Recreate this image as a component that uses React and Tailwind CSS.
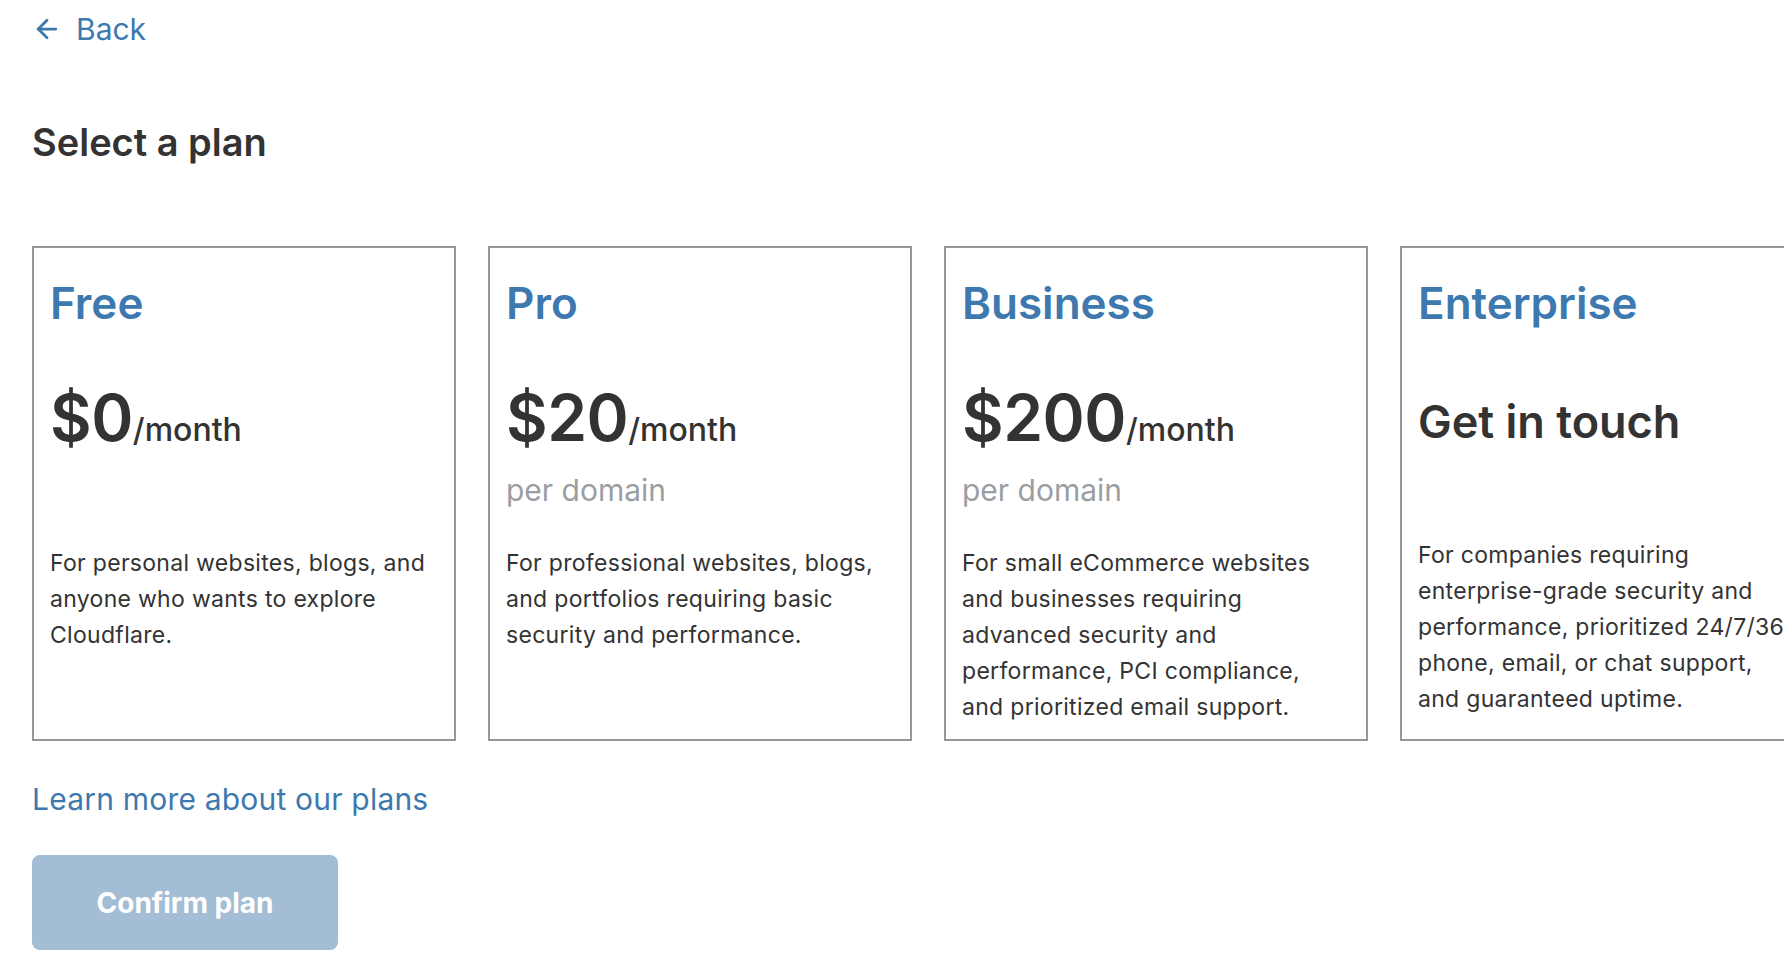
import { ArrowLeft } from "lucide-react";

const plans = [
  {
    name: "Free",
    price: "$0",
    perDomain: false,
    desc: "For personal websites, blogs, and anyone who wants to explore Cloudflare.",
  },
  {
    name: "Pro",
    price: "$20",
    perDomain: true,
    desc: "For professional websites, blogs, and portfolios requiring basic security and performance.",
  },
  {
    name: "Business",
    price: "$200",
    perDomain: true,
    desc: "For small eCommerce websites and businesses requiring advanced security and performance, PCI compliance, and prioritized email support.",
  },
];

function PlanCard({ plan }) {
  return (
    <div className="w-[424px] h-[495px] shrink-0 border-2 border-[#929799] pl-4 pr-[22px] pt-[28px]">
      <h2 className="text-[44px] leading-[54px] font-semibold text-[#3d79ae]">{plan.name}</h2>
      <div className="h-[215px] pt-[50px]">
        <div className="flex items-baseline text-[#333333] leading-[76px]">
          <span className="text-[64px] font-semibold tracking-[-0.5px]">{plan.price}</span>
          <span className="text-[32px] font-medium">/month</span>
        </div>
        {plan.perDomain && (
          <p className="mt-[4px] text-[30px] leading-[36px] text-[#9a9ea3]">per domain</p>
        )}
      </div>
      <p className="text-[23px] leading-[36px] text-[#333333] tracking-[0.3px]">{plan.desc}</p>
    </div>
  );
}

export default function App() {
  return (
    <div
      className="min-h-screen w-full overflow-hidden bg-white pl-8"
      style={{ fontFamily: "Inter, 'Noto Sans', sans-serif" }}
    >
      <a href="#" className="pt-[11px] flex items-center gap-[14px] text-[30px] leading-[36px] text-[#3d79ae]">
        <ArrowLeft size={30} strokeWidth={2.2} />
        Back
      </a>

      <h1 className="mt-[73px] text-[38px] leading-[44px] font-semibold text-[#333333]">Select a plan</h1>

      <div className="mt-[82px] flex gap-8">
        {plans.map((p) => (
          <PlanCard key={p.name} plan={p} />
        ))}
        <div className="w-[424px] h-[495px] shrink-0 border-2 border-[#929799] px-4 pt-[28px]">
          <h2 className="text-[44px] leading-[54px] font-semibold text-[#3d79ae]">Enterprise</h2>
          <div className="h-[207px] pt-[54px]">
            <p className="text-[45px] leading-[76px] font-semibold text-[#333333]">Get in touch</p>
          </div>
          <p className="text-[23px] leading-[36px] text-[#333333] tracking-[0.3px] whitespace-nowrap">
            For companies requiring
            <br />
            enterprise-grade security and
            <br />
            performance, prioritized 24/7/365
            <br />
            phone, email, or chat support,
            <br />
            and guaranteed uptime.
          </p>
        </div>
      </div>

      <a href="#" className="mt-[40px] block text-[30px] leading-[36px] tracking-[0.2px] text-[#3d79ae]">
        Learn more about our plans
      </a>

      <button
        disabled
        className="mt-[38px] w-[306px] h-[95px] rounded-lg bg-[#a3bdd5] text-[28px] font-bold text-white"
      >
        Confirm plan
      </button>
    </div>
  );
}
